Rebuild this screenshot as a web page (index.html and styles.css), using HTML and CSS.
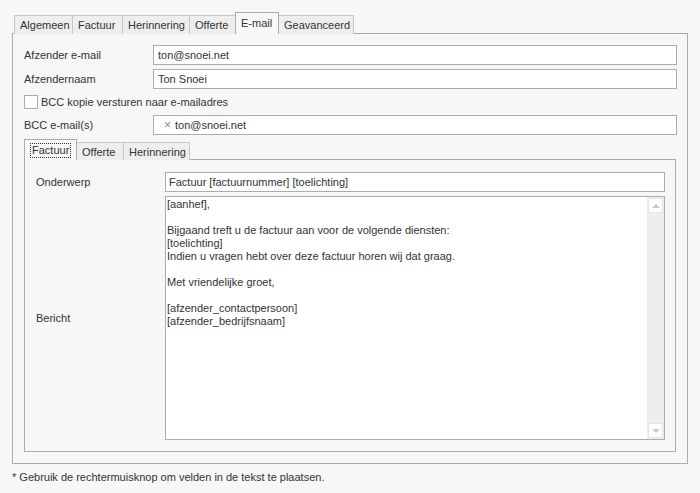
FILE: index.html
```html
<!DOCTYPE html>
<html>
<head>
<meta charset="utf-8">
<link rel="stylesheet" href="styles.css">
</head>
<body>
<div class="tabs outer-tabs">
  <div class="tab">Algemeen</div>
  <div class="tab">Factuur</div>
  <div class="tab">Herinnering</div>
  <div class="tab">Offerte</div>
  <div class="tab active">E-mail</div>
  <div class="tab">Geavanceerd</div>
</div>
<div class="panel outer-panel">
  <div class="row">
    <div class="label">Afzender e-mail</div>
    <div class="input">ton@snoei.net</div>
  </div>
  <div class="row">
    <div class="label">Afzendernaam</div>
    <div class="input">Ton Snoei</div>
  </div>
  <div class="row check-row">
    <span class="checkbox"></span>
    <span class="check-label">BCC kopie versturen naar e-mailadres</span>
  </div>
  <div class="row">
    <div class="label">BCC e-mail(s)</div>
    <div class="input token-input"><span class="token-x">×</span><span>ton@snoei.net</span></div>
  </div>
  <div class="tabs inner-tabs">
    <div class="tab active"><span class="focus">Factuur</span></div>
    <div class="tab">Offerte</div>
    <div class="tab">Herinnering</div>
  </div>
  <div class="panel inner-panel">
    <div class="row">
      <div class="label inner-label">Onderwerp</div>
      <div class="input subject">Factuur [factuurnummer] [toelichting]</div>
    </div>
    <div class="row message-row">
      <div class="label inner-label">Bericht</div>
      <div class="memo">
        <div class="memo-text">[aanhef],<br><br>Bijgaand treft u de factuur aan voor de volgende diensten:<br>[toelichting]<br>Indien u vragen hebt over deze factuur horen wij dat graag.<br><br>Met vriendelijke groet,<br><br>[afzender_contactpersoon]<br>[afzender_bedrijfsnaam]</div>
        <div class="scrollbar">
          <div class="sb-btn"><span class="arrow up"></span></div>
          <div class="sb-btn"><span class="arrow down"></span></div>
        </div>
      </div>
    </div>
  </div>
</div>
<div class="footnote">* Gebruik de rechtermuisknop om velden in de tekst te plaatsen.</div>
</body>
</html>
```
FILE: styles.css
```css
html, body {
  margin: 0;
  padding: 0;
  background: #f7f7f7;
}
body {
  font-family: "Liberation Sans", Arial, sans-serif;
  font-size: 11px;
  color: #333333;
  width: 700px;
  height: 493px;
  overflow: hidden;
}
.tabs {
  display: flex;
  align-items: flex-end;
  position: relative;
  z-index: 1;
}
.outer-tabs {
  padding: 12px 0 0 14px;
  height: 34px;
  box-sizing: border-box;
  margin-bottom: -1px;
}
.tab {
  box-sizing: border-box;
  height: 19px;
  padding: 0 5px;
  border: 1px solid #c6c6c6;
  border-bottom: none;
  margin-left: -1px;
  background: #eeeeee;
  display: flex;
  align-items: center;
  white-space: nowrap;
}
.tab:first-child { margin-left: 0; }
.outer-tabs .tab:nth-child(1) { width: 59px; }
.outer-tabs .tab:nth-child(2) { width: 51px; }
.outer-tabs .tab:nth-child(3) { width: 68px; }
.outer-tabs .tab:nth-child(4) { width: 47px; }
.outer-tabs .tab:nth-child(5) { width: 44px; }
.outer-tabs .tab:nth-child(6) { width: 76px; }
.tab.active {
  height: 22px;
  background: #f7f7f7;
  border-color: #acacac;
  position: relative;
  z-index: 2;
  padding-bottom: 2px;
}
.panel {
  box-sizing: border-box;
  border: 1px solid #acacac;
  background: #f7f7f7;
}
.outer-panel {
  margin-left: 12px;
  width: 676px;
  height: 431px;
  padding: 11px 10px 11px 11px;
}
.row {
  display: flex;
  align-items: center;
  height: 20px;
  margin-bottom: 4px;
}
.label {
  width: 129px;
  flex: none;
}
.input {
  box-sizing: border-box;
  flex: 1;
  height: 20px;
  border: 1px solid #acacac;
  background: #ffffff;
  padding: 0 4px;
  display: flex;
  align-items: center;
  white-space: nowrap;
}
.check-row {
  height: 18px;
}
.checkbox {
  box-sizing: border-box;
  width: 14px;
  height: 14px;
  border: 1px solid #acacac;
  background: #ffffff;
  margin-right: 3px;
  flex: none;
}
.token-input {
  padding-left: 10px;
}
.token-x {
  color: #8a8a8a;
  font-size: 12px;
  margin-right: 4px;
}
.inner-tabs {
  height: 21px;
  margin-bottom: -1px;
}
.inner-tabs .tab {
  height: 18px;
}
.inner-tabs .tab:nth-child(1) { width: 53px; }
.inner-tabs .tab:nth-child(2) { width: 48px; }
.inner-tabs .tab:nth-child(3) { width: 67px; }
.inner-tabs .tab.active {
  height: 21px;
  padding: 2px 5px 2px 5px;
}
.focus {
  border: 1px dotted #333333;
  padding: 0 1px;
  line-height: 13px;
}
.inner-panel {
  width: 652px;
  height: 293px;
  padding: 12px 10px 11px 11px;
}
.inner-panel .row:last-child {
  margin-bottom: 0;
}
.inner-label {
  width: 129px;
}
.subject {
  padding-left: 3px;
}
.message-row {
  height: 244px;
}
.memo {
  box-sizing: border-box;
  flex: 1;
  height: 244px;
  border: 1px solid #acacac;
  background: #ffffff;
  display: flex;
}
.memo-text {
  flex: 1;
  padding: 1px 1px;
  line-height: 13px;
  color: #333333;
}
.scrollbar {
  width: 17px;
  background: #eeeeee;
  display: flex;
  flex-direction: column;
  justify-content: space-between;
  padding: 1px 1px 1px 1px;
  box-sizing: border-box;
}
.sb-btn {
  box-sizing: border-box;
  width: 15px;
  height: 15px;
  background: #ffffff;
  border: 1px solid #e4e4e4;
  display: flex;
  align-items: center;
  justify-content: center;
}
.arrow {
  width: 0;
  height: 0;
  border-left: 4px solid transparent;
  border-right: 4px solid transparent;
}
.arrow.up {
  border-bottom: 4px solid #c8c8c8;
}
.arrow.down {
  border-top: 4px solid #c8c8c8;
}
.footnote {
  margin: 6px 0 0 12px;
  line-height: 14px;
}
```
